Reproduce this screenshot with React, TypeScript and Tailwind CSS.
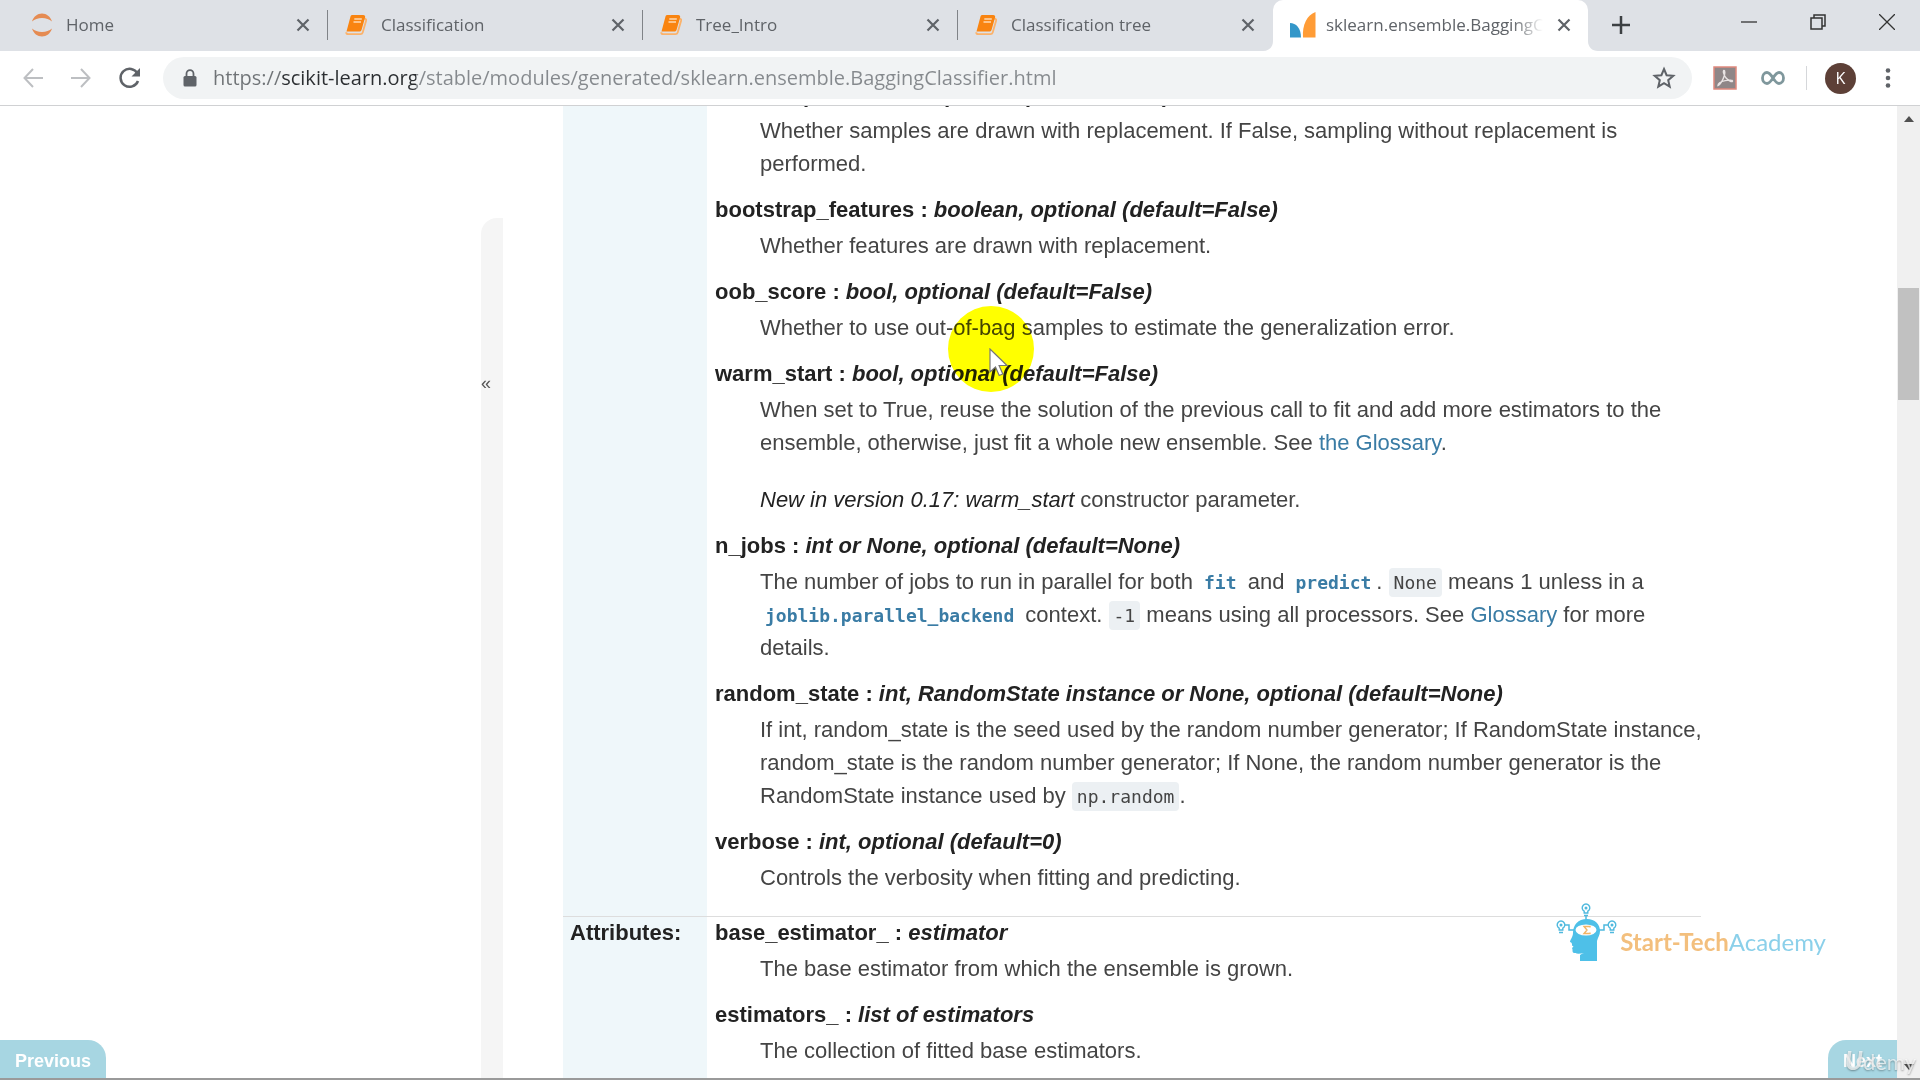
import type { ReactNode } from "react";

const tabs = [
  { title: "Home", icon: "jupyter" },
  { title: "Classification", icon: "book" },
  { title: "Tree_Intro", icon: "book" },
  { title: "Classification tree", icon: "book" },
];

function JupyterIcon() {
  return (
    <svg viewBox="0 0 24 26" className="h-[26px] w-6" fill="#e58b52">
      <path d="M2 9.500C3.500 4.500 7.500 1.500 12 1.500s8.500 3 10 8C19.500 7.200 16 6 12 6S4.500 7.200 2 9.500z" />
      <path d="M2 16.500c1.500 5 5.500 8 10 8s8.500-3 10-8c-2.500 2.300-6 3.500-10 3.500s-7.500-1.200-10-3.500z" />
    </svg>
  );
}

function BookIcon() {
  return (
    <svg viewBox="0 0 24 22" className="h-[22px] w-6">
      <path
        d="M19.500 4.500l1.200.6c.6.300.6.900.4 1.600l-3.400 11.800c-.3 1-1.200 1.700-2.200 1.700H3.500c-1.300 0-2.300-.7-2.300-2"
        fill="none"
        stroke="#fbb26b"
        strokeWidth="1.800"
      />
      <path d="M7.300 1h10.900c1.500 0 2.300 1 1.900 2.400l-3.500 12.300c-.3 1.200-1.100 1.800-2.200 1.800H1.500L5.500 2.500c.3-1 .9-1.500 1.800-1.500z" fill="#f98410" />
      <path d="M9.300 5h7.500M8.500 8h7.500" stroke="#ffd9b0" strokeWidth="1.400" />
    </svg>
  );
}

function CloseIcon() {
  return (
    <svg viewBox="0 0 14 14" className="h-3.5 w-3.5" stroke="#5f6368" strokeWidth="2.200">
      <path d="M1.500 1.500l11 11M12.500 1.500l-11 11" />
    </svg>
  );
}

function SklearnIcon() {
  return (
    <svg viewBox="0 0 26 26" className="h-[26px] w-[26px]">
      <path d="M0 11c6 0 11 5 11 14.500H0z" fill="#3497c9" />
      <path d="M25.500 0v25.500H13C12 13 17 3 25.500 0z" fill="#ff9c36" />
    </svg>
  );
}

function TabStrip() {
  return (
    <header className="flex h-[51px] shrink-0 items-stretch bg-[#dee1e6] pl-[13px]">
      {tabs.map((tab, i) => (
        <div key={tab.title} className="flex w-[315px] shrink items-center pb-0.5 pl-[17px]">
          <button className="flex min-w-0 flex-1 items-center gap-3 text-left text-[17px] text-[#5f6368]">
            {tab.icon === "jupyter" ? <JupyterIcon /> : <BookIcon />}
            <span>{tab.title}</span>
          </button>
          <button aria-label={"Close " + tab.title} className="mr-[17px]">
            <CloseIcon />
          </button>
          <span className={i < 3 ? "h-[30px] w-px bg-[#808388]" : "h-[30px] w-px"} />
        </div>
      ))}
      <div className="relative flex w-[315px] shrink items-center rounded-t-[10px] bg-white px-[17px] pb-0.5">
        <svg className="absolute -left-2.5 bottom-0 h-2.5 w-2.5" viewBox="0 0 10 10" fill="#fff">
          <path d="M10 0v10H0C6 10 10 6 10 0z" />
        </svg>
        <svg className="absolute -right-2.5 bottom-0 h-2.5 w-2.5" viewBox="0 0 10 10" fill="#fff">
          <path d="M0 0v10h10C4 10 0 6 0 0z" />
        </svg>
        <button className="flex min-w-0 flex-1 items-center gap-2.5 text-left text-[17px] text-[#5f6368]">
          <span className="shrink-0">
            <SklearnIcon />
          </span>
          <span className="overflow-hidden whitespace-nowrap [mask-image:linear-gradient(to_right,black_86%,transparent)]">
            sklearn.ensemble.BaggingClassifier
          </span>
        </button>
        <button aria-label="Close sklearn.ensemble.BaggingClassifier" className="ml-3.5">
          <CloseIcon />
        </button>
      </div>
      <button aria-label="New tab" className="ml-6 flex items-center pb-0.5">
        <svg viewBox="0 0 18 18" className="h-[18px] w-[18px]" stroke="#3c4043" strokeWidth="2.500">
          <path d="M9 0v18M0 9h18" />
        </svg>
      </button>
      <div className="ml-auto flex items-center gap-[53px] pb-2 pr-[25px]">
        <button aria-label="Minimize">
          <svg viewBox="0 0 16 16" className="h-4 w-4" stroke="#333" strokeWidth="1.300">
            <path d="M0 8h16" />
          </svg>
        </button>
        <button aria-label="Restore">
          <svg viewBox="0 0 16 16" className="h-4 w-4" fill="none" stroke="#333" strokeWidth="1.500">
            <path d="M1 4h11v11H1zM4 4V1h11v11h-3" />
          </svg>
        </button>
        <button aria-label="Close window">
          <svg viewBox="0 0 16 16" className="h-4 w-4" stroke="#333" strokeWidth="1.300">
            <path d="M0 0l16 16M16 0L0 16" />
          </svg>
        </button>
      </div>
    </header>
  );
}

function Toolbar() {
  return (
    <div className="flex h-[55px] shrink-0 items-center border-b border-[#d0d1d3] bg-white pl-[23px] pr-[29px]">
      <div className="flex items-center gap-7">
        <button aria-label="Back">
          <svg viewBox="0 0 20 20" className="h-5 w-5" fill="none" stroke="#bdbfc2" strokeWidth="2">
            <path d="M20 10H1.500M10 1L1.500 10l8.500 9" />
          </svg>
        </button>
        <button aria-label="Forward">
          <svg viewBox="0 0 20 20" className="h-5 w-5" fill="none" stroke="#bdbfc2" strokeWidth="2">
            <path d="M0 10h18.500M10 1l8.500 9-8.500 9" />
          </svg>
        </button>
        <button aria-label="Reload">
          <svg viewBox="0 0 22 22" className="h-[22px] w-[22px]">
            <path d="M18.500 6.500A9 9 0 1 0 19 14" fill="none" stroke="#5f6368" strokeWidth="2.500" />
            <path d="M21 1v8.500h-8.500z" fill="#5f6368" />
          </svg>
        </button>
      </div>
      <div className="ml-[22px] flex h-[42px] min-w-0 flex-1 items-center rounded-full bg-[#f1f3f4] pl-5 pr-4">
        <svg viewBox="0 0 14 18" className="h-[18px] w-3.5 shrink-0">
          <path d="M3.500 8V4.700a3.500 3.500 0 0 1 7 0V8" fill="none" stroke="#5f6368" strokeWidth="1.800" />
          <rect x="0.500" y="7" width="13" height="10.500" rx="1.500" fill="#5f6368" />
        </svg>
        <input
          aria-label="Address"
          defaultValue="https://scikit-learn.org/stable/modules/generated/sklearn.ensemble.BaggingClassifier.html"
          className="ml-4 min-w-0 flex-1 bg-[linear-gradient(to_right,#6f7376_69px,#2b2e31_69px,#2b2e31_203px,#85898d_203px)] bg-clip-text text-[20px] leading-8 text-transparent outline-none"
        />
        <button aria-label="Bookmark this page">
          <svg viewBox="0 0 24 24" className="h-6 w-6" fill="none" stroke="#5f6368" strokeWidth="2">
            <path d="M12 3l2.600 6.200 6.700.6-5.100 4.400 1.500 6.500L12 17.200l-5.700 3.500 1.500-6.500-5.100-4.400 6.700-.6z" />
          </svg>
        </button>
      </div>
      <button aria-label="Acrobat" className="ml-[21px]">
        <svg viewBox="0 0 24 24" className="h-6 w-6">
          <rect x="1" y="1" width="22" height="22" fill="#8f8687" stroke="#e0897d" strokeWidth="1.500" />
          <path
            d="M5 19.500c2-.5 5-5.500 6.200-9.500.8-2.800.9-5.500-.2-5.500-1.300 0-.5 4.500 2.300 7.800 2.200 2.500 5.700 4.200 6.200 2.900.4-1.200-3.500-1.400-7.300-.6-4 .9-7.200 2.900-7.200 4.900z"
            fill="none"
            stroke="#e9e3e3"
            strokeWidth="1.400"
          />
        </svg>
      </button>
      <button aria-label="Infinity extension" className="ml-6">
        <svg viewBox="0 0 24 14" className="h-3.5 w-6" fill="none">
          <path d="M12 7C9.500 3 8 1.500 6 1.500a4.500 5.500 0 0 0 0 11C8 12.500 9.500 11 12 7s4-5.500 6-5.500a4.500 5.500 0 0 1 0 11c-2 0-3.500-1.500-6-5.500z" stroke="#7f979c" strokeWidth="2.800" />
        </svg>
      </button>
      <span className="ml-[21px] h-6 w-px bg-[#d5d7da]" />
      <button className="ml-[18px] flex h-[31px] w-[31px] items-center justify-center rounded-full bg-[#5d4037] text-base text-white">
        K
      </button>
      <button aria-label="Menu" className="ml-[29px]">
        <svg viewBox="0 0 6 20" className="h-5 w-1.5" fill="#5f6368">
          <circle cx="3" cy="2.500" r="2.300" />
          <circle cx="3" cy="10" r="2.300" />
          <circle cx="3" cy="17.500" r="2.300" />
        </svg>
      </button>
    </div>
  );
}

function Param({ name, type, children }: { name: string; type: string; children: ReactNode }) {
  return (
    <>
      <dt className="font-bold leading-8 text-[#222]">
        {name} : <em>{type}</em>
      </dt>
      <dd className="-mr-2 mb-[14px] ml-[45px] mt-[3px] leading-[33px]">{children}</dd>
    </>
  );
}

function Code({ children }: { children: ReactNode }) {
  return (
    <code className="rounded bg-[#ecf0f3] px-[5px] py-1 font-['DejaVu_Sans_Mono',monospace] text-[18px] leading-none text-[#444]">
      {children}
    </code>
  );
}

function CodeLink({ children }: { children: ReactNode }) {
  return (
    <a href="#ref" className="px-[5px] font-['DejaVu_Sans_Mono',monospace] text-[18px] font-bold leading-none text-[#3a7ca5]">
      {children}
    </a>
  );
}

function Docs() {
  return (
    <table className="-mt-[27px] w-full border-collapse text-left text-[22px] text-[#444]">
      <tbody>
        <tr className="align-top">
          <th className="w-36 bg-[#eff7fa]" />
          <td className="pl-2">
            <dl>
              <Param name="bootstrap" type="boolean, optional (default=True)">
                Whether samples are drawn with replacement. If False, sampling without replacement is performed.
              </Param>
              <Param name="bootstrap_features" type="boolean, optional (default=False)">
                Whether features are drawn with replacement.
              </Param>
              <Param name="oob_score" type="bool, optional (default=False)">
                Whether to use out-of-bag samples to estimate the generalization error.
              </Param>
              <Param name="warm_start" type="bool, optional (default=False)">
                <p>
                  When set to True, reuse the solution of the previous call to fit and add more estimators to the
                  ensemble, otherwise, just fit a whole new ensemble. See{" "}
                  <a href="#glossary" className="text-[#3a7ca5]">the Glossary</a>.
                </p>
                <p className="mt-6">
                  <em className="text-[#222]">New in version 0.17:</em> <em className="text-[#222]">warm_start</em> constructor parameter.
                </p>
              </Param>
              <Param name="n_jobs" type="int or None, optional (default=None)">
                The number of jobs to run in parallel for both <CodeLink>fit</CodeLink> and{" "}
                <CodeLink>predict</CodeLink>. <Code>None</Code> means 1 unless in a{" "}
                <CodeLink>joblib.parallel_backend</CodeLink> context. <Code>-1</Code> means using all processors. See{" "}
                <a href="#glossary" className="text-[#3a7ca5]">Glossary</a> for more details.
              </Param>
              <Param name="random_state" type="int, RandomState instance or None, optional (default=None)">
                If int, random_state is the seed used by the random number generator; If RandomState instance,
                random_state is the random number generator; If None, the random number generator is the
                RandomState instance used by <Code>np.random</Code>.
              </Param>
              <Param name="verbose" type="int, optional (default=0)">
                Controls the verbosity when fitting and predicting.
              </Param>
            </dl>
            <div className="h-2" />
          </td>
        </tr>
        <tr className="border-t border-[#dddddd] align-top">
          <th className="w-36 bg-[#eff7fa] pl-[7px] font-bold leading-8 text-[#222]">Attributes:</th>
          <td className="pl-2">
            <dl>
              <Param name="base_estimator_" type="estimator">
                The base estimator from which the ensemble is grown.
              </Param>
              <Param name="estimators_" type="list of estimators">
                The collection of fitted base estimators.
              </Param>
            </dl>
          </td>
        </tr>
      </tbody>
    </table>
  );
}

function Bulb({ x, y }: { x: number; y: number }) {
  return (
    <g transform={`translate(${x} ${y})`} fill="none" stroke="#4fb9de" strokeWidth="1.400">
      <path d="M-1.800 5v-1.800a3.800 3.800 0 1 1 3.600 0V5zM-2 7.500h4" />
      <circle cx="0" cy="0" r="0.800" />
    </g>
  );
}

function Watermark() {
  return (
    <div className="absolute bottom-[116px] right-[71px] flex items-end">
      <svg viewBox="0 0 62 60" className="h-[60px] w-[62px]">
        <Bulb x={30} y={6} />
        <Bulb x={5} y={23} />
        <Bulb x={56} y={23} />
        <path d="M30 13.500V18M9 23h4v5h6M52 23h-4v5h-6" fill="none" stroke="#4fb9de" strokeWidth="1.500" />
        <path
          d="M31 17c8 0 13 5 13 12 0 4-2 6-3 10v20H24v-6c1-1 2-1 4-2-4 1-9 1-11-.5-1-1 0-3-1-4.500l1.500-1.500-1.500-1c0-2 0-3-2-3.500 0-2 3-5 3-9 0-8 5-14 14-14z"
          fill="#4ec0e8"
        />
        <ellipse cx="30" cy="28" rx="10.500" ry="5.500" fill="#fff" />
        <path d="M34 25.500v-1h-6l3 3.500-3 3.500h6v-1" fill="none" stroke="#f2b566" strokeWidth="1.400" />
      </svg>
      <span className="mb-1.5 ml-0.5 font-['Lato',sans-serif] text-[24px] leading-7 text-[#8bd0ea]">
        <b className="font-bold text-[#f3bf7d]">Start-Tech</b>Academy
      </span>
    </div>
  );
}

function Scrollbar() {
  return (
    <div className="flex w-[23px] shrink-0 flex-col items-center justify-between bg-[#f0f0f0] pb-2 pt-2.5">
      <svg viewBox="0 0 10 6" className="h-1.5 w-2.5" fill="#505050">
        <path d="M5 0l5 6H0z" />
      </svg>
      <span className="mb-auto mt-[166px] h-28 w-[21px] bg-[#c1c1c1]" />
      <svg viewBox="0 0 10 6" className="h-1.5 w-2.5" fill="#505050">
        <path d="M5 6l5-6H0z" />
      </svg>
    </div>
  );
}

export default function App() {
  return (
    <div className="flex h-screen flex-col overflow-hidden bg-white font-['Open_Sans',sans-serif]">
      <TabStrip />
      <Toolbar />
      <div className="flex min-h-0 flex-1 border-b-2 border-[#9a9a9a] font-['Liberation_Sans',Arial,sans-serif]">
        <div className="relative flex min-w-0 flex-1 overflow-hidden">
          <aside className="flex w-[503px] shrink-0 justify-end pt-28">
            <button aria-label="Collapse sidebar" className="flex w-[22px] items-start rounded-tl-2xl bg-[#f5f5f5] pt-[151px] text-lg text-[#555]">
              «
            </button>
          </aside>
          <main className="min-w-0 flex-1 pl-[60px] pr-[196px]">
            <Docs />
          </main>
          <a href="#previous" className="absolute bottom-0 left-0 flex h-[38px] w-[106px] items-center justify-center rounded-tr-[18px] bg-[#a7d6e2] pt-1 text-[18px] font-bold text-white">
            Previous
          </a>
          <a href="#next" className="absolute bottom-0 right-0 flex h-[38px] w-[69px] items-center rounded-tl-[18px] bg-[#a7d6e2] pl-[15px] pt-1 text-[18px] font-bold text-white">
            Next
          </a>
          <Watermark />
        </div>
        <Scrollbar />
      </div>
      <span className="absolute bottom-1 right-1 font-['Lato',sans-serif] text-[22px] leading-7 text-white/70 [text-shadow:0_1px_2px_rgba(0,0,0,0.35)]">
        <i className="text-[26px] font-bold">U</i>demy
      </span>
      <div className="absolute left-[948px] top-[306px] h-[86px] w-[86px] rounded-full bg-[#ffff00] mix-blend-multiply" />
      <svg viewBox="0 0 20 30" className="absolute left-[989px] top-[348px] h-[30px] w-5">
        <path d="M1 1v23l5.500-5 3.700 8.500 3.600-1.500-3.700-8.500H18z" fill="#fff" stroke="#777" strokeWidth="1.200" />
      </svg>
    </div>
  );
}
